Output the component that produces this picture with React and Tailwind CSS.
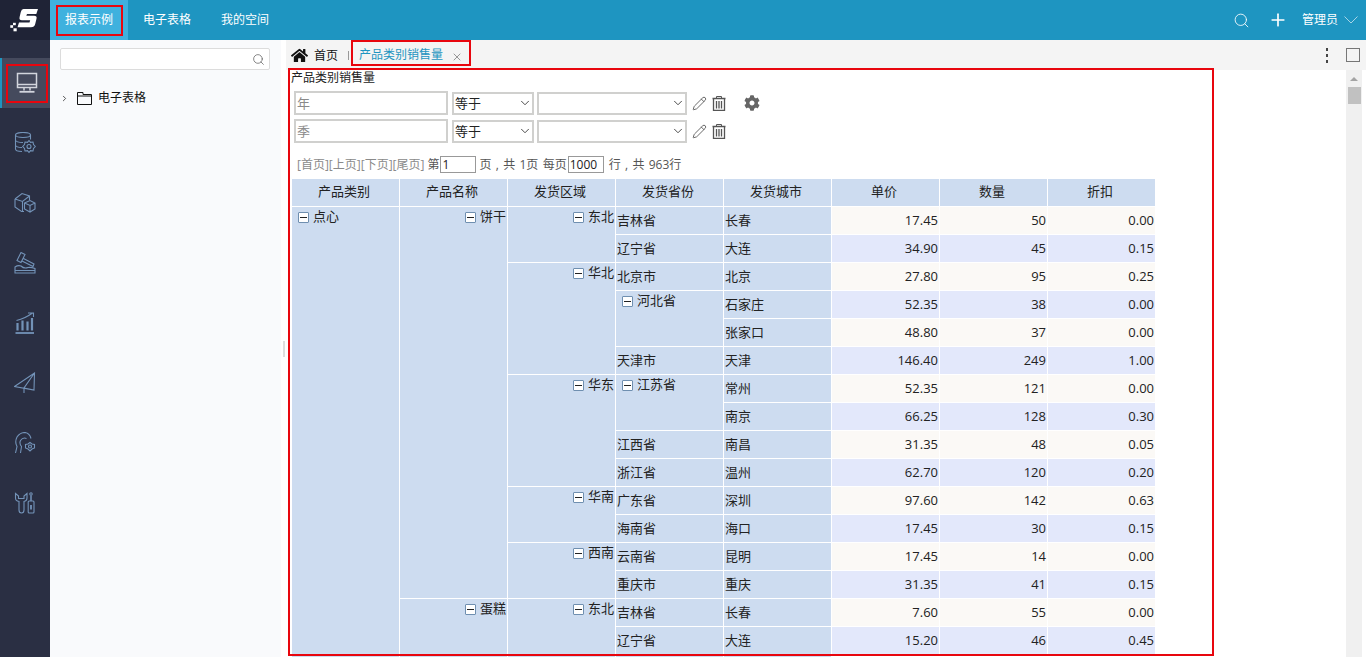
import React from 'react';
import { ChevronDown, ChevronRight, Search, Plus, X, Pencil } from 'lucide-react';
import { FaHome, FaCog } from 'react-icons/fa';

const FONT = "font-['Open_Sans','Noto_Sans_CJK_SC',sans-serif]";

// 行数据: 单价 / 数量 / 折扣
const rows = [
  { city: '长春', price: '17.45', qty: 50, off: '0.00' },
  { city: '大连', price: '34.90', qty: 45, off: '0.15' },
  { city: '北京', price: '27.80', qty: 95, off: '0.25' },
  { city: '石家庄', price: '52.35', qty: 38, off: '0.00' },
  { city: '张家口', price: '48.80', qty: 37, off: '0.00' },
  { city: '天津', price: '146.40', qty: 249, off: '1.00' },
  { city: '常州', price: '52.35', qty: 121, off: '0.00' },
  { city: '南京', price: '66.25', qty: 128, off: '0.30' },
  { city: '南昌', price: '31.35', qty: 48, off: '0.05' },
  { city: '温州', price: '62.70', qty: 120, off: '0.20' },
  { city: '深圳', price: '97.60', qty: 142, off: '0.63' },
  { city: '海口', price: '17.45', qty: 30, off: '0.15' },
  { city: '昆明', price: '17.45', qty: 14, off: '0.00' },
  { city: '重庆', price: '31.35', qty: 41, off: '0.15' },
  { city: '长春', price: '7.60', qty: 55, off: '0.00' },
  { city: '大连', price: '15.20', qty: 46, off: '0.45' },
];

const headers = ['产品类别', '产品名称', '发货区域', '发货省份', '发货城市', '单价', '数量', '折扣'];

// 合并单元格: 行号 -> 内容 / 跨行数
const col1 = { 0: { text: '点心', span: 16 } };
const col2 = { 0: { text: '饼干', span: 14 }, 14: { text: '蛋糕', span: 2 } };
const col3 = {
  0: { text: '东北', span: 2 },
  2: { text: '华北', span: 4 },
  6: { text: '华东', span: 4 },
  10: { text: '华南', span: 2 },
  12: { text: '西南', span: 2 },
  14: { text: '东北', span: 2 },
};
const col4 = {
  0: { text: '吉林省' },
  1: { text: '辽宁省' },
  2: { text: '北京市' },
  3: { text: '河北省', span: 2 },
  5: { text: '天津市' },
  6: { text: '江苏省', span: 2 },
  8: { text: '江西省' },
  9: { text: '浙江省' },
  10: { text: '广东省' },
  11: { text: '海南省' },
  12: { text: '云南省' },
  13: { text: '重庆市' },
  14: { text: '吉林省' },
  15: { text: '辽宁省' },
};

const Logo = () => (
  <svg width="50" height="40" viewBox="0 0 50 40">
    <path d="M23.500 9 H38 L36.300 14 H27 L26.300 15.700 H34 Q37.300 15.700 36.500 18.700 L35.200 24 Q34.400 27.300 31 27.300 H17.500 L19 22.500 H29.500 L30.200 20.300 H22 Q18.800 20.300 19.600 17 L20.800 12 Q21.500 9 23.500 9 Z" fill="#fff" />
    <rect x="13" y="22.800" width="2.800" height="2.400" fill="#fff" />
    <rect x="10.300" y="25.200" width="2.800" height="2.600" fill="#fff" />
    <rect x="13.500" y="28.300" width="3.200" height="3" fill="#fff" />
  </svg>
);

const Monitor = () => (
  <svg width="22" height="22" viewBox="0 0 22 22" fill="none" stroke="#d2d5dd" strokeWidth="1.500">
    <rect x="1.500" y="1.500" width="19" height="14" />
    <path d="M1.500 12.500 H20.500" />
    <path d="M8 16 V18.500 M14 16 V18.500" />
    <path d="M3.500 19.800 H18.500" strokeWidth="1.800" />
  </svg>
);

const sideIcons = [
  // 数据库 + 齿轮
  <g key="db">
    <ellipse cx="9" cy="3" rx="7.500" ry="2.500" />
    <path d="M1.500 3 V17 Q1.500 19.500 8 19.500 M1.500 8 Q2 10.500 9 10.500 M1.500 13 Q2 15.500 8 15.500 M16.500 3 V7.500" />
    <circle cx="15" cy="14.500" r="2" />
    <path d="M15 8.500 L16.500 10.300 L19 10 L19.500 12.500 L21.300 14.500 L19.500 16.500 L19 19 L16.500 18.700 L15 20.500 L13.500 18.700 L11 19 L10.500 16.500 L8.700 14.500 L10.500 12.500 L11 10 L13.500 10.300 Z" />
  </g>,
  // 立方体
  <g key="box">
    <path d="M1 7 L8 1.500 L15.500 4 V8 M1 7 L8.500 9.500 L15.500 4 M1 7 V15 L7.500 19.500 H10 M8.500 9.500 V19" />
    <path d="M10.500 11 L16 8.500 L21 11 V17 L16 20 L10.500 17 Z M10.500 11 L16 13.500 L21 11 M16 13.500 V20" />
  </g>,
  // 锤子
  <g key="hammer">
    <path d="M7 0.500 L11 2.500 L7 10.500 L3 8.500 Z M9.500 6.500 L20 12 L19 14.500 L8 9" />
    <path d="M1 21 V15 Q4 13 7 14 Q10 17 14 15.500 Q17 15 21 16.500 V21 Z M1 18.500 H21" />
  </g>,
  // 柱状图
  <g key="chart">
    <path d="M1.500 21 H20" strokeWidth="1.800" />
    <path d="M3.500 18.500 V11 M8.500 18.500 V8.500 M13.500 18.500 V9.500 M18 18.500 V6" strokeWidth="2.200" />
    <path d="M2.500 8.500 Q11 6.500 18.500 1 M14 1 H19.500 V5" />
  </g>,
  // 纸飞机
  <g key="plane">
    <path d="M0.500 14.500 L20.500 1 L20 18 L0.500 14.500 Z M20.500 1 L10 16 V21 M10 16 L20 18" />
  </g>,
  // 人头 + 齿轮
  <g key="head">
    <path d="M1.500 21 L3 14.500 Q0.500 10 3 5 Q6 0.500 11 0.500 Q15.500 1 17 6.500 M6.500 21 L7.500 14.500 Q5 11.500 6.500 8.500 Q9 5 12.500 6.500" />
    <path d="M16 10.500 L18 12 L20.500 12.500 L20.500 16 L18 17 L16 19 L14 17 L11.500 16 L11.500 12.500 L14 12 Z" />
    <circle cx="16" cy="14.500" r="1.500" />
  </g>,
  // 扳手 + 螺丝刀
  <g key="tools">
    <path d="M1.500 1.500 V6 Q1.500 9 5 9.500 V18 Q5 21 7.500 21 Q10 21 10 18 V9.500 Q13 9 13 6 V1.500 L10 4 V6.500 H4.500 V4 Z" />
    <path d="M17 3.500 V9" strokeWidth="1.500" />
    <circle cx="17" cy="2" r="1.200" />
    <rect x="14.200" y="9" width="5.800" height="12" rx="1" />
    <path d="M17 13 V17.500" strokeWidth="1.800" />
  </g>,
];

// 小方框减号
const Minus = () => (
  <span className="inline-flex items-center justify-center w-[11px] h-[11px] border border-[#6f8fb0] bg-white rounded-[1px] mr-[3px] shrink-0">
    <span className="block w-[7px] h-px bg-[#222]" />
  </span>
);

const Merged = ({ cell, align }) => (
  <td
    rowSpan={cell.span || 1}
    className={`align-top p-0 border-r border-b border-white bg-[#cddcf0] ${align === 'right' ? 'pr-px' : 'pl-[6px]'}`}
  >
    <div className={`flex items-center h-[20px] ${align === 'right' ? 'justify-end' : ''}`}>
      <Minus />
      <span className="ml-[1px]">{cell.text}</span>
    </div>
  </td>
);

const Plain = ({ children }) => (
  <td className="p-0 pl-px h-[28px] border-r border-b border-white bg-[#cddcf0]">{children}</td>
);

const Num = ({ children, bg }) => (
  <td className={`p-0 pr-px h-[28px] text-right border-r border-b border-white ${bg}`}>{children}</td>
);

function ReportTable() {
  return (
    <table className="table-fixed border-separate border-spacing-0 w-[864px] text-[13px] text-[#222]">
      <colgroup>
        {headers.map(h => <col key={h} className="w-[108px]" />)}
      </colgroup>
      <thead>
        <tr>
          {headers.map(h => (
            <th key={h} className="h-[28px] p-0 pr-[3px] pb-[2px] font-normal text-center bg-[#cddcf0] border-r border-b border-white">{h}</th>
          ))}
        </tr>
      </thead>
      <tbody>
        {rows.map((r, i) => {
          const bg = i % 2 === 0 ? 'bg-[#fbf9f6]' : 'bg-[#e3e8fb]';
          const p = col4[i];
          return (
            <tr key={i}>
              {col1[i] && <Merged cell={col1[i]} align="left" />}
              {col2[i] && <Merged cell={col2[i]} align="right" />}
              {col3[i] && <Merged cell={col3[i]} align="right" />}
              {p && (p.span ? <Merged cell={p} align="left" /> : <Plain>{p.text}</Plain>)}
              <Plain>{r.city}</Plain>
              <Num bg={bg}>{r.price}</Num>
              <Num bg={bg}>{r.qty}</Num>
              <Num bg={bg}>{r.off}</Num>
            </tr>
          );
        })}
        <tr>
          {[0, 1, 2, 3, 4].map(n => <td key={n} className="h-[28px] p-0 bg-[#cddcf0] border-r border-white" />)}
        </tr>
      </tbody>
    </table>
  );
}

const SelectBox = ({ width, value }) => (
  <div className={`relative h-[23px] ${width}`}>
    <select
      defaultValue={value}
      className="appearance-none w-full h-full border-2 border-[#d0d0ce] bg-white pl-[1px] text-[13px] text-[#222] outline-none"
    >
      {value ? <option>{value}</option> : <option value=""></option>}
    </select>
    <ChevronDown size={14} strokeWidth={1.500} className="absolute right-[2px] top-[4px] text-[#333] pointer-events-none" />
  </div>
);

const Trash = () => (
  <svg width="14" height="15" viewBox="0 0 14 15" fill="none" stroke="#555" className="ml-[5px]">
    <path d="M0.500 2.500 H13.500" strokeWidth="1.500" />
    <path d="M4.500 2 V0.500 H9.500 V2" />
    <path d="M1.500 3 V14.500 H12.500 V3" strokeWidth="1.300" />
    <path d="M4.500 5 V12.500 M7 5 V12.500 M9.500 5 V12.500" strokeWidth="1.300" />
  </svg>
);

const FilterRow = ({ label, gear }) => (
  <div className="flex items-center h-[24px]">
    <input
      placeholder={label}
      className="w-[154px] h-[24px] border-2 border-[#d0d0ce] px-[1px] text-[13px] placeholder:text-[#8a8a8a] outline-none"
    />
    <div className="w-[4px]" />
    <SelectBox width="w-[82px]" value="等于" />
    <div className="w-[3px]" />
    <SelectBox width="w-[150px]" value="" />
    <Pencil size={15} strokeWidth={1.400} className="ml-[5px] text-[#555]" />
    <Trash />
    {gear && <FaCog size={16} className="ml-[18px] text-[#666]" />}
  </div>
);

export default function App() {
  return (
    <div className={`relative w-screen h-screen overflow-hidden flex flex-col bg-white text-[12px] text-[#222] ${FONT}`}>
      {/* 顶部导航 */}
      <header className="flex items-center h-[40px] shrink-0 bg-[#1e95c1] text-white">
        <div className="w-[50px] h-full bg-[#1f2336]"><Logo /></div>
        <div className="flex items-center justify-center w-[78px] h-full bg-[#3fb1de]">
          <div className="flex items-center justify-center w-[67px] h-[31px] border-2 border-[#e8060e]">报表示例</div>
        </div>
        <span className="ml-[15px]">电子表格</span>
        <span className="ml-[30px]">我的空间</span>
        <Search size={17} strokeWidth={1.200} className="ml-auto" />
        <Plus size={20} strokeWidth={2} className="ml-[18px]" />
        <span className="ml-[14px]">管理员</span>
        <svg width="14" height="8" viewBox="0 0 14 8" fill="none" stroke="#a8d4e6" className="ml-[6px] mr-[8px]">
          <path d="M0.500 0.500 L7 7 L13.500 0.500" />
        </svg>
      </header>

      <div className="flex flex-1 min-h-0">
        {/* 左侧图标栏 */}
        <aside className="w-[50px] shrink-0 bg-[#2a2f43] pt-[13px]">
          <div className="flex items-center h-[60px]">
            <div className="flex items-center w-full h-[50px] bg-[#454a5d] border-l-2 border-[#1e95c1]">
              <div className="flex items-center justify-center w-[42px] h-[39px] ml-[4px] border-2 border-[#e8060e]"><Monitor /></div>
            </div>
          </div>
          {sideIcons.map((icon, i) => (
            <div key={i} className="flex items-center justify-center h-[60px]">
              <svg width="22" height="22" viewBox="0 0 22 22" fill="none" stroke="#7393b8" strokeWidth="1.100">{icon}</svg>
            </div>
          ))}
        </aside>

        {/* 目录树 */}
        <nav className="w-[231px] shrink-0 bg-[#f9fafc] pt-[8px] pl-[10px] pr-[11px]">
          <div className="flex items-center h-[22px] border border-[#dcdcdc] rounded-[2px] bg-white pr-[4px]">
            <Search size={13} strokeWidth={1.300} className="ml-auto text-[#555]" />
          </div>
          <div className="flex items-center mt-[20px] h-[16px]">
            <ChevronRight size={9} strokeWidth={2} className="text-[#222]" />
            <svg width="15" height="13" viewBox="0 0 15 13" fill="none" stroke="#111" className="ml-[8px]">
              <path d="M0.500 0.500 H6 V2.500 H14.500 V12.500 H0.500 Z M0.500 4 H14.500" />
            </svg>
            <span className="ml-[6px] text-[#111]">电子表格</span>
          </div>
        </nav>

        {/* 分隔条 */}
        <div className="flex items-center justify-center w-[5px] shrink-0 bg-white">
          <span className="block w-[2px] h-[16px] bg-[#ddd]" />
        </div>

        {/* 主区域 */}
        <main className="flex flex-col flex-1 min-w-0">
          <div className="flex items-center h-[30px] shrink-0 bg-[#f4f4f4]">
            <FaHome size={17} className="ml-[5px] mt-[1px] text-[#111]" />
            <span className="ml-[6px] mt-[1px] text-[#111]">首页</span>
            <span className="ml-[10px] mt-[1px] w-px h-[9px] bg-[#999]" />
            <div className="flex items-center self-start h-[26px] w-[120px] ml-[2px] pt-[4px] border-2 border-[#e8060e] pl-[6px] text-[#1e95c1]">
              <span>产品类别销售量</span>
              <X size={12} strokeWidth={1.500} className="ml-[8px] mt-[3px] text-[#777]" />
            </div>
            <span className="ml-auto mr-[18px] flex flex-col gap-[3px]">
              <i className="block w-[2px] h-[3px] bg-[#444]" />
              <i className="block w-[2px] h-[3px] bg-[#444]" />
              <i className="block w-[2px] h-[3px] bg-[#444]" />
            </span>
            <span className="w-[14px] h-[14px] border border-[#777] mr-[6px]" />
          </div>

          <div className="flex flex-1 min-h-0">
            <div className="flex-1 min-w-0 overflow-hidden pl-[5px]">
              <div className="h-[21px] leading-[16px]">产品类别销售量</div>
              <div className="flex flex-col gap-[4px] pl-[3px]">
                <FilterRow label="年" gear />
                <FilterRow label="季" />
              </div>
              <div className="flex items-center h-[17px] mt-[13px] pl-[6px] text-[#555] [word-spacing:1.200px]">
                <span className="text-[#8a8a8a]">[首页][上页][下页][尾页]</span>
                <span className="ml-[3px]">第</span>
                <input defaultValue="1" className="w-[36px] h-[17px] ml-px border border-[#999] px-px text-[12px] text-[#222] outline-none" />
                <span className="ml-[3px]">页 , 共 1页 每页</span>
                <input defaultValue="1000" className="w-[36px] h-[17px] ml-px border border-[#999] px-px text-[12px] text-[#222] outline-none" />
                <span className="ml-[5px]">行 , 共 963行</span>
              </div>
              <div className="mt-[6px] ml-px"><ReportTable /></div>
            </div>

            {/* 滚动条 */}
            <div className="flex flex-col items-center w-[16px] shrink-0 mr-[4px] bg-[#f0f0f0] pt-[7px]">
              <span className="block w-0 h-0 border-x-[4px] border-x-transparent border-b-[4px] border-b-[#a3a3a3]" />
              <span className="block w-[13px] h-[17px] mt-[6px] bg-[#c1c1c1]" />
            </div>
          </div>
        </main>
      </div>

      {/* 标注框 */}
      <div className="absolute left-[288px] top-[68px] w-[926px] h-[588px] border-2 border-[#e8060e] pointer-events-none" />
    </div>
  );
}
